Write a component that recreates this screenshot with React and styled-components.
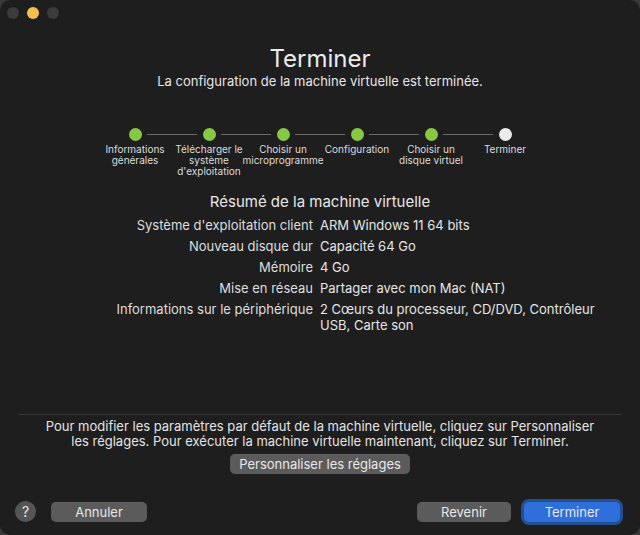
import styled, { createGlobalStyle } from "styled-components";

const GlobalStyle = createGlobalStyle`
  html, body {
    margin: 0;
    padding: 0;
    background: #3a3a3a;
  }
  body {
    font-family: Inter, "Noto Sans", "Liberation Sans", sans-serif;
    color: #e4e4e4;
    -webkit-font-smoothing: antialiased;
  }
`;

const steps = [
  { label: ["Informations", "générales"], done: true },
  { label: ["Télécharger le", "système", "d'exploitation"], done: true },
  { label: ["Choisir un", "microprogramme"], done: true },
  { label: ["Configuration"], done: true },
  { label: ["Choisir un", "disque virtuel"], done: true },
  { label: ["Terminer"], done: false },
];

const summary = [
  ["Système d'exploitation client", "ARM Windows 11 64 bits"],
  ["Nouveau disque dur", "Capacité 64 Go"],
  ["Mémoire", "4 Go"],
  ["Mise en réseau", "Partager avec mon Mac (NAT)"],
  [
    "Informations sur le périphérique",
    "2 Cœurs du processeur, CD/DVD, Contrôleur USB, Carte son",
  ],
];

const App = () => {
  return (
    <>
      <GlobalStyle />
      <Window>
        <TitleBar>
          <Light />
          <Light $color="#f3c04c" />
          <Light />
        </TitleBar>

        <Header>
          <Title>Terminer</Title>
          <Subtitle>La configuration de la machine virtuelle est terminée.</Subtitle>
        </Header>

        <Stepper>
          <DotRow>
            {steps.map((step, i) => (
              <DotCell key={i}>
                <Dot $done={step.done} />
                {i < steps.length - 1 && <Connector />}
              </DotCell>
            ))}
          </DotRow>
          <LabelRow>
            {steps.map((step, i) => (
              <StepLabel key={i}>
                <span>
                  {step.label.map((line, j) => (
                    <span key={j}>
                      {line}
                      {j < step.label.length - 1 && <br />}
                    </span>
                  ))}
                </span>
              </StepLabel>
            ))}
          </LabelRow>
        </Stepper>

        <Summary>
          <SummaryTitle>Résumé de la machine virtuelle</SummaryTitle>
          <SummaryGrid>
            {summary.map(([label, value]) => (
              <SummaryRow key={label}>
                <RowLabel>{label}</RowLabel>
                <RowValue>{value}</RowValue>
              </SummaryRow>
            ))}
          </SummaryGrid>
        </Summary>

        <Footer>
          <Separator />
          <Hint>
            Pour modifier les paramètres par défaut de la machine virtuelle, cliquez sur Personnaliser
            <br />
            les réglages. Pour exécuter la machine virtuelle maintenant, cliquez sur Terminer.
          </Hint>
          <CustomizeButton>Personnaliser les réglages</CustomizeButton>
          <ActionBar>
            <HelpButton>?</HelpButton>
            <Button $width={96}>Annuler</Button>
            <Spacer />
            <Button $width={94}>Revenir</Button>
            <Button $width={96} $primary>
              Terminer
            </Button>
          </ActionBar>
        </Footer>
      </Window>
    </>
  );
};

export default App;

/* WINDOW */
const Window = styled.div`
  box-sizing: border-box;
  width: 640px;
  height: 535px;
  display: flex;
  flex-direction: column;
  background: #1e1e1e;
  border-radius: 10px;
  overflow: hidden;
`;

const TitleBar = styled.div`
  display: flex;
  align-items: center;
  gap: 8px;
  height: 26px;
  padding-left: 7px;
`;

const Light = styled.div`
  width: 12px;
  height: 12px;
  border-radius: 50%;
  background: ${(props) => props.$color || "#3c3c3c"};
`;

/* HEADER */
const Header = styled.div`
  display: flex;
  flex-direction: column;
  align-items: center;
  margin-top: 19px;
`;

const Title = styled.h1`
  margin: 0;
  font-size: 24px;
  font-weight: 400;
  line-height: 28px;
  color: #ececec;
`;

const Subtitle = styled.div`
  font-size: 13px;
  line-height: 16px;
  color: #e6e6e6;
`;

/* STEPPER */
const Stepper = styled.div`
  display: flex;
  flex-direction: column;
  align-items: center;
  margin-top: 39px;
`;

const DotRow = styled.div`
  display: flex;
  width: 444px;
`;

const DotCell = styled.div`
  position: relative;
  width: 74px;
  height: 13px;
  display: flex;
  justify-content: center;
`;

const Dot = styled.div`
  width: 13px;
  height: 13px;
  border-radius: 50%;
  background: ${(props) => (props.$done ? "#84c941" : "#ebebeb")};
`;

const Connector = styled.div`
  position: absolute;
  top: 6px;
  left: 49px;
  width: 50px;
  height: 1px;
  background: #6b6b6b;
`;

const LabelRow = styled.div`
  display: flex;
  width: 444px;
  margin-top: 3px;
`;

const StepLabel = styled.div`
  width: 74px;
  display: flex;
  justify-content: center;
  font-size: 10px;
  line-height: 11px;
  text-align: center;
  white-space: nowrap;
  color: #dcdcdc;
`;

/* SUMMARY */
const Summary = styled.div`
  display: flex;
  flex-direction: column;
  align-items: center;
  margin-top: 16px;
`;

const SummaryTitle = styled.h2`
  margin: 0;
  font-size: 15px;
  font-weight: 400;
  line-height: 18px;
  color: #e8e8e8;
`;

const SummaryGrid = styled.div`
  display: flex;
  flex-direction: column;
  gap: 5px;
  margin-top: 6px;
  width: 640px;
`;

const SummaryRow = styled.div`
  display: grid;
  grid-template-columns: 313px 292px;
  column-gap: 7px;
  font-size: 13px;
  line-height: 16px;
`;

const RowLabel = styled.div`
  text-align: right;
  color: #dedede;
  white-space: nowrap;
`;

const RowValue = styled.div`
  color: #e6e6e6;
`;

/* FOOTER */
const Footer = styled.div`
  margin-top: auto;
  display: flex;
  flex-direction: column;
  align-items: center;
`;

const Separator = styled.div`
  align-self: stretch;
  height: 1px;
  margin: 0 18px;
  background: #363636;
`;

const Hint = styled.p`
  margin: 4px 0 0;
  font-size: 13px;
  line-height: 15px;
  text-align: center;
  color: #e4e4e4;
`;

const Button = styled.button`
  box-sizing: border-box;
  width: ${(props) => props.$width}px;
  height: 20px;
  padding: 0;
  border: none;
  border-radius: 5px;
  font-family: inherit;
  font-size: 13px;
  line-height: 20px;
  color: #e8e8e8;
  background: ${(props) => (props.$primary ? "#2f6fdc" : "#5b5b5b")};
  box-shadow: ${(props) =>
    props.$primary ? "0 0 0 3px #234f8f" : "0 0.5px 0 rgba(255,255,255,0.08) inset"};
`;

const CustomizeButton = styled(Button)`
  width: 180px;
  margin-top: 5px;
`;

const ActionBar = styled.div`
  align-self: stretch;
  display: flex;
  align-items: center;
  gap: 13px;
  padding: 27px 20px 13px 15px;
`;

const HelpButton = styled.div`
  width: 21px;
  height: 21px;
  margin-right: 2px;
  border-radius: 50%;
  background: #555555;
  color: #e8e8e8;
  font-size: 14px;
  line-height: 21px;
  text-align: center;
`;

const Spacer = styled.div`
  flex: 1;
`;
